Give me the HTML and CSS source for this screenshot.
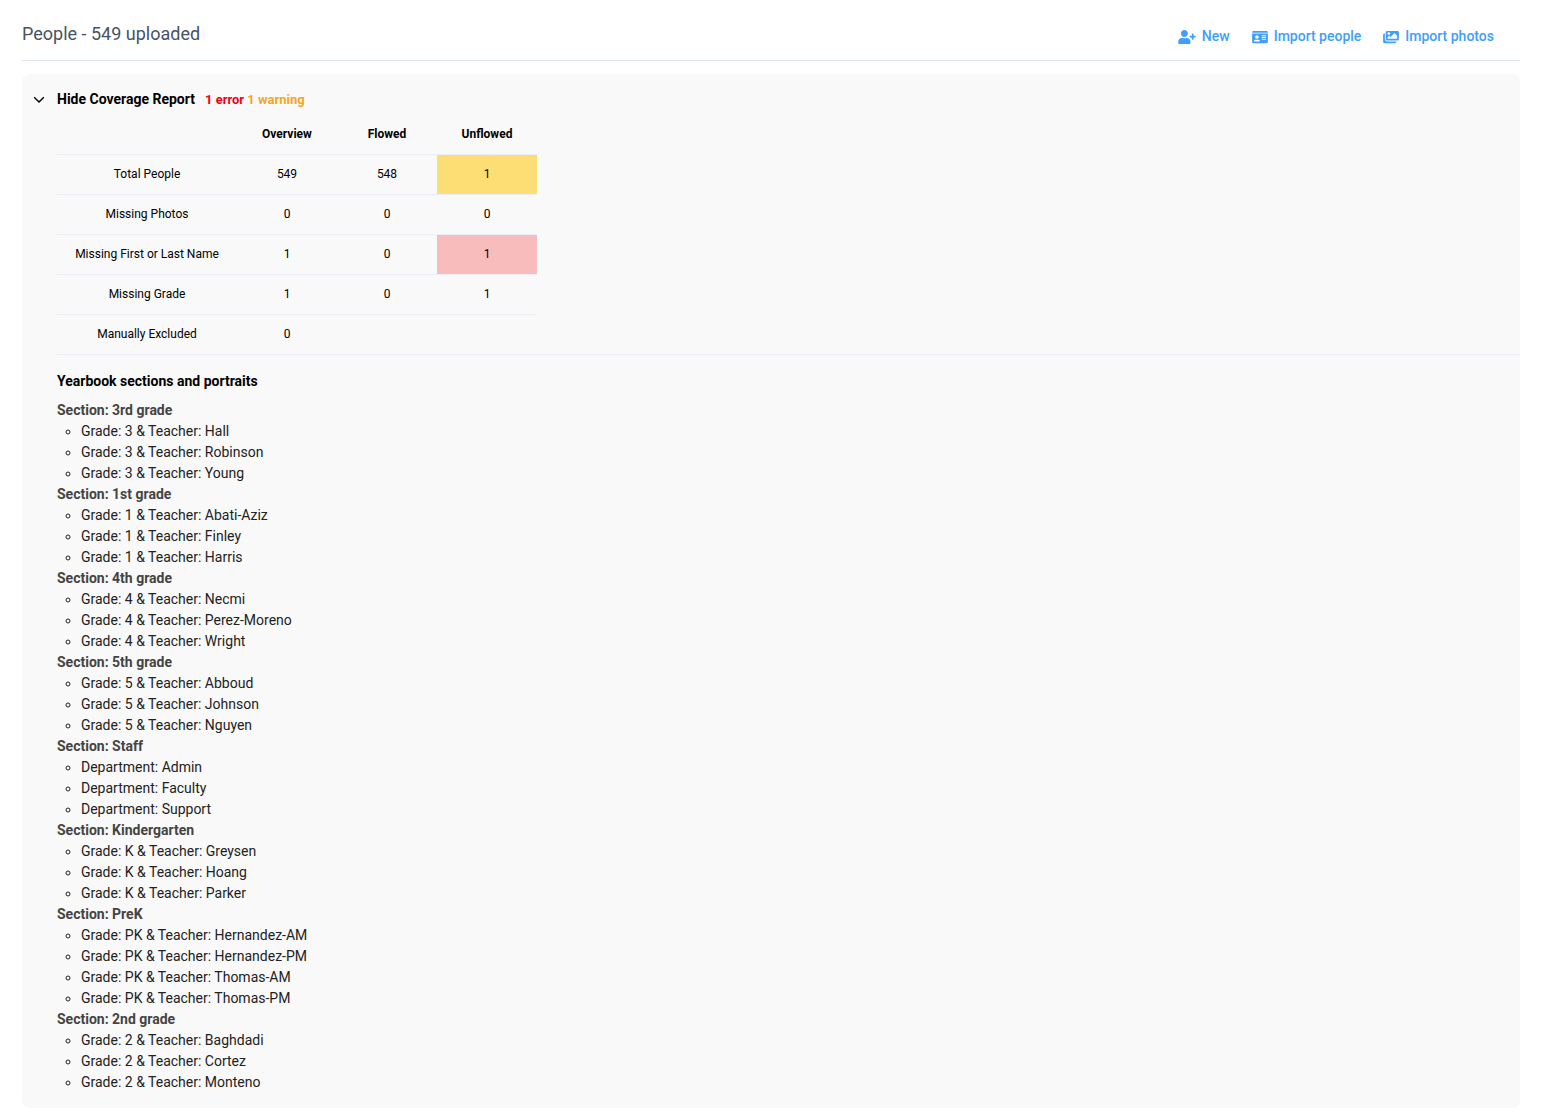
FILE: index.html
```html
<!DOCTYPE html>
<html lang="en">

<head>
    <meta charset="UTF-8">
    <meta name="viewport" content="width=device-width, initial-scale=1.0">
    <title>People</title>
    <link rel="stylesheet" href="styles.css">
</head>

<body>
    <header class="page-header">
        <h1>People - 549 uploaded</h1>
        <div class="actions">
            <button type="button">
                <svg width="18" height="14" viewBox="0 0 640 512" aria-hidden="true">
                    <path d="M624 208h-64v-64c0-8.8-7.2-16-16-16h-32c-8.8 0-16 7.2-16 16v64h-64c-8.8 0-16 7.2-16 16v32c0 8.8 7.2 16 16 16h64v64c0 8.8 7.2 16 16 16h32c8.8 0 16-7.2 16-16v-64h64c8.8 0 16-7.2 16-16v-32c0-8.8-7.2-16-16-16zm-400 48c70.7 0 128-57.3 128-128S294.7 0 224 0 96 57.3 96 128s57.3 128 128 128zm89.6 32h-16.7c-22.2 10.2-46.9 16-72.9 16s-50.6-5.8-72.9-16h-16.7C60.2 288 0 348.2 0 422.4V464c0 26.5 21.5 48 48 48h352c26.5 0 48-21.5 48-48v-41.6c0-74.2-60.2-134.4-134.4-134.4z" />
                </svg>
                New
            </button>
            <button type="button">
                <svg width="16" height="14" viewBox="0 0 576 512" aria-hidden="true">
                    <path d="M528 32H48C21.5 32 0 53.5 0 80v16h576V80c0-26.5-21.5-48-48-48zM0 432c0 26.5 21.5 48 48 48h480c26.5 0 48-21.5 48-48V128H0v304zm352-232c0-4.4 3.6-8 8-8h144c4.4 0 8 3.6 8 8v16c0 4.4-3.6 8-8 8H360c-4.4 0-8-3.6-8-8v-16zm0 64c0-4.4 3.6-8 8-8h144c4.4 0 8 3.6 8 8v16c0 4.4-3.6 8-8 8H360c-4.4 0-8-3.6-8-8v-16zm0 64c0-4.4 3.6-8 8-8h144c4.4 0 8 3.6 8 8v16c0 4.4-3.6 8-8 8H360c-4.4 0-8-3.6-8-8v-16zM176 192c35.3 0 64 28.7 64 64s-28.7 64-64 64-64-28.7-64-64 28.7-64 64-64zM67.1 396.2C75.5 370.5 99.6 352 128 352h8.2c12.3 5.1 25.7 8 39.8 8s27.6-2.9 39.8-8h8.2c28.4 0 52.5 18.5 60.9 44.2 3.2 9.9-5.2 19.8-15.6 19.8H82.7c-10.4 0-18.8-10-15.6-19.8z" />
                </svg>
                Import people
            </button>
            <button type="button">
                <svg width="16" height="14" viewBox="0 0 576 512" aria-hidden="true">
                    <path d="M480 416v16c0 26.51-21.49 48-48 48H48c-26.51 0-48-21.49-48-48V176c0-26.51 21.49-48 48-48h16v208c0 44.112 35.888 80 80 80h336zm96-80V80c0-26.51-21.49-48-48-48H144c-26.51 0-48 21.49-48 48v256c0 26.51 21.49 48 48 48h384c26.51 0 48-21.49 48-48zM256 128c0 26.51-21.49 48-48 48s-48-21.49-48-48 21.49-48 48-48 48 21.49 48 48zm-96 144l55.515-55.515c4.686-4.686 12.284-4.686 16.971 0L272 256l135.515-135.515c4.686-4.686 12.284-4.686 16.971 0L512 208v112H160v-48z" />
                </svg>
                Import photos
            </button>
        </div>
    </header>

    <main class="panel">
        <div class="panel-header">
            <button type="button" class="toggle" aria-expanded="true" aria-controls="report">
                <svg width="12" height="12" viewBox="0 0 12 12" aria-hidden="true">
                    <path d="M1.2 3.3L6 8.1L10.8 3.3" />
                </svg>
                Hide Coverage Report
            </button>
            <p class="status"><span class="error">1 error</span> <span class="warning">1 warning</span></p>
        </div>

        <div id="report" class="report">
            <div class="table-wrap">
                <table>
                    <thead>
                        <tr>
                            <td class="label"></td>
                            <th scope="col">Overview</th>
                            <th scope="col">Flowed</th>
                            <th scope="col">Unflowed</th>
                        </tr>
                    </thead>
                    <tbody>
                        <tr>
                            <th scope="row">Total People</th>
                            <td>549</td>
                            <td>548</td>
                            <td class="cell-warning">1</td>
                        </tr>
                        <tr>
                            <th scope="row">Missing Photos</th>
                            <td>0</td>
                            <td>0</td>
                            <td>0</td>
                        </tr>
                        <tr>
                            <th scope="row">Missing First or Last Name</th>
                            <td>1</td>
                            <td>0</td>
                            <td class="cell-error">1</td>
                        </tr>
                        <tr>
                            <th scope="row">Missing Grade</th>
                            <td>1</td>
                            <td>0</td>
                            <td>1</td>
                        </tr>
                        <tr>
                            <th scope="row">Manually Excluded</th>
                            <td>0</td>
                            <td></td>
                            <td></td>
                        </tr>
                    </tbody>
                </table>
            </div>

            <h2>Yearbook sections and portraits</h2>

            <section>
                <h3>Section: 3rd grade</h3>
                <ul>
                    <li>Grade: 3 &amp; Teacher: Hall</li>
                    <li>Grade: 3 &amp; Teacher: Robinson</li>
                    <li>Grade: 3 &amp; Teacher: Young</li>
                </ul>
            </section>
            <section>
                <h3>Section: 1st grade</h3>
                <ul>
                    <li>Grade: 1 &amp; Teacher: Abati-Aziz</li>
                    <li>Grade: 1 &amp; Teacher: Finley</li>
                    <li>Grade: 1 &amp; Teacher: Harris</li>
                </ul>
            </section>
            <section>
                <h3>Section: 4th grade</h3>
                <ul>
                    <li>Grade: 4 &amp; Teacher: Necmi</li>
                    <li>Grade: 4 &amp; Teacher: Perez-Moreno</li>
                    <li>Grade: 4 &amp; Teacher: Wright</li>
                </ul>
            </section>
            <section>
                <h3>Section: 5th grade</h3>
                <ul>
                    <li>Grade: 5 &amp; Teacher: Abboud</li>
                    <li>Grade: 5 &amp; Teacher: Johnson</li>
                    <li>Grade: 5 &amp; Teacher: Nguyen</li>
                </ul>
            </section>
            <section>
                <h3>Section: Staff</h3>
                <ul>
                    <li>Department: Admin</li>
                    <li>Department: Faculty</li>
                    <li>Department: Support</li>
                </ul>
            </section>
            <section>
                <h3>Section: Kindergarten</h3>
                <ul>
                    <li>Grade: K &amp; Teacher: Greysen</li>
                    <li>Grade: K &amp; Teacher: Hoang</li>
                    <li>Grade: K &amp; Teacher: Parker</li>
                </ul>
            </section>
            <section>
                <h3>Section: PreK</h3>
                <ul>
                    <li>Grade: PK &amp; Teacher: Hernandez-AM</li>
                    <li>Grade: PK &amp; Teacher: Hernandez-PM</li>
                    <li>Grade: PK &amp; Teacher: Thomas-AM</li>
                    <li>Grade: PK &amp; Teacher: Thomas-PM</li>
                </ul>
            </section>
            <section>
                <h3>Section: 2nd grade</h3>
                <ul>
                    <li>Grade: 2 &amp; Teacher: Baghdadi</li>
                    <li>Grade: 2 &amp; Teacher: Cortez</li>
                    <li>Grade: 2 &amp; Teacher: Monteno</li>
                </ul>
            </section>
        </div>
    </main>
</body>

</html>
```

FILE: styles.css
```css
* {
    box-sizing: border-box;
}

body {
    margin: 0;
    padding: 10px 22px;
    background-color: #fff;
    color: #222;
    font-family: Roboto, Arial, sans-serif;
    font-size: 14px;
    line-height: 21px;
}

h1,
h2,
h3,
p,
ul {
    margin: 0;
    padding: 0;
}

button {
    display: flex;
    align-items: center;
    padding: 0;
    border: none;
    background: none;
    font: inherit;
    cursor: pointer;
}

.page-header {
    display: flex;
    align-items: flex-end;
    justify-content: space-between;
    padding: 10px 26px 13px 0;
    border-bottom: 1px solid #dce3ec;
}

.page-header h1 {
    color: #475364;
    font-size: 18px;
    font-weight: 400;
    line-height: 27px;
}

.actions {
    display: flex;
    gap: 22px;
}

.actions button {
    gap: 6px;
    color: #409eff;
    font-weight: 500;
}

.actions svg {
    fill: currentColor;
}

.panel {
    margin-top: 13px;
    padding: 15px 0;
    border-radius: 8px;
    background-color: #f9f9f9;
}

.panel-header {
    display: flex;
    align-items: center;
    gap: 10px;
    padding-left: 11px;
    margin-bottom: 5px;
}

.toggle {
    gap: 12px;
    color: #000;
    font-weight: 700;
}

.toggle svg {
    fill: none;
    stroke: #000;
    stroke-width: 1.4;
}

.status {
    font-size: 13px;
    font-weight: 700;
}

.error {
    color: #f00014;
}

.warning {
    color: #f5a623;
}

.report {
    padding-left: 35px;
}

.table-wrap {
    border-bottom: 1px solid #ebedf7;
}

table {
    border-collapse: separate;
    border-spacing: 0;
    table-layout: fixed;
    width: 480px;
    color: #000;
    font-size: 12px;
    text-align: center;
}

th,
td {
    width: 100px;
    height: 40px;
    padding: 0;
    border-bottom: 1px solid #ebedf7;
}

.label {
    width: 180px;
}

tbody th {
    font-weight: 400;
}

tbody tr:last-child > * {
    height: 39px;
    border-bottom: none;
}

.cell-warning {
    background-color: #fcde74;
}

.cell-error {
    background-color: #f9bcbc;
}

h2 {
    margin: 16px 0 8px;
    color: #000;
    font-size: 14px;
    font-weight: 700;
}

h3 {
    color: #444;
    font-size: 14px;
    font-weight: 700;
}

ul {
    padding-left: 24px;
    list-style: circle;
}
```
